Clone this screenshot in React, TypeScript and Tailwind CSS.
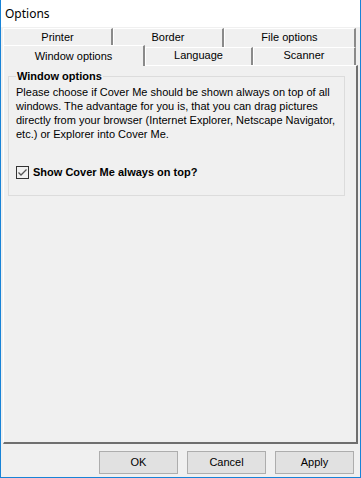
export default function App() {
  return (
    <div
      className="w-[361px] h-[478px] flex flex-col bg-[#f0f0f0] border-x border-b border-[#1883d7] text-black"
      style={{ fontFamily: '"Liberation Sans", Arial, sans-serif' }}
    >
      {/* title bar */}
      <div className="h-[27px] bg-white flex items-center pl-[4px]">
        <span className="text-[12px] font-['Noto_Sans',sans-serif]">Options</span>
      </div>

      {/* tab rows */}
      <div className="mt-[1px] px-[2px]">
        <div className="flex h-[19px] text-[11px]">
          <BackTab label="Printer" w="w-[110px]" />
          <BackTab label="Border" w="w-[111px]" />
          <BackTab label="File options" w="w-[132px]" />
        </div>
        <div className="flex h-[18px] text-[11px]">
          <div className="relative z-10 -mt-[2px] h-[21px] w-[142px] bg-[#f0f0f0] border-l border-t border-white border-r-2 border-r-[#8a8a8a] flex justify-center pt-[2px]">
            Window options
          </div>
          <FrontTab label="Language" w="w-[108px]" />
          <FrontTab label="Scanner" w="w-[103px]" />
        </div>
      </div>

      {/* panel */}
      <div className="flex-1 mx-[2px] border-l border-t border-white border-r-2 border-b-2 border-r-[#6f6f6f] border-b-[#6f6f6f] pt-[4px] pl-[4px]">
        <fieldset className="w-[337px] h-[126px] border border-[#dcdcdc] px-[7px] pt-0">
          <legend className="text-[11px] font-bold px-[1px] leading-[13px]">Window options</legend>
          <p className="text-[11px] leading-[14px] mt-[2px]">
            Please choose if Cover Me should be shown always on top of all windows. The advantage for you is, that
            you can drag pictures directly from your browser (Internet Explorer, Netscape Navigator, etc.) or
            Explorer into Cover Me.
          </p>
          <label className="flex items-center gap-[4px] mt-[23px] text-[11px] font-bold">
            <CheckBox />
            Show Cover Me always on top?
          </label>
        </fieldset>
      </div>

      {/* buttons */}
      <div className="h-[33px] flex justify-end gap-[9px] pt-[7px] pr-[6px]">
        <WinButton label="OK" />
        <WinButton label="Cancel" />
        <WinButton label="Apply" />
      </div>
    </div>
  );
}

function BackTab({ label, w }: { label: string; w: string }) {
  return (
    <div
      className={`${w} h-[19px] border-l border-t border-white border-r-2 border-r-[#8a8a8a] flex justify-center pt-[2px] leading-[13px]`}
    >
      {label}
    </div>
  );
}

function FrontTab({ label, w }: { label: string; w: string }) {
  return (
    <div
      className={`${w} h-[18px] border-l border-t border-white border-r-2 border-r-[#8a8a8a] flex justify-center pt-[1px] leading-[13px]`}
    >
      {label}
    </div>
  );
}

function WinButton({ label }: { label: string }) {
  return (
    <button className="w-[79px] h-[23px] bg-[#e1e1e1] border border-[#adadad] text-[11px] flex items-center justify-center">
      {label}
    </button>
  );
}

function CheckBox() {
  return (
    <svg width="13" height="13" viewBox="0 0 13 13">
      <rect x="0.5" y="0.5" width="12" height="12" fill="#f0f0f0" stroke="#333333" />
      <path d="M2.5 6.5 5 9 10.5 3.5" fill="none" stroke="#555555" strokeWidth="1.3" />
    </svg>
  );
}
